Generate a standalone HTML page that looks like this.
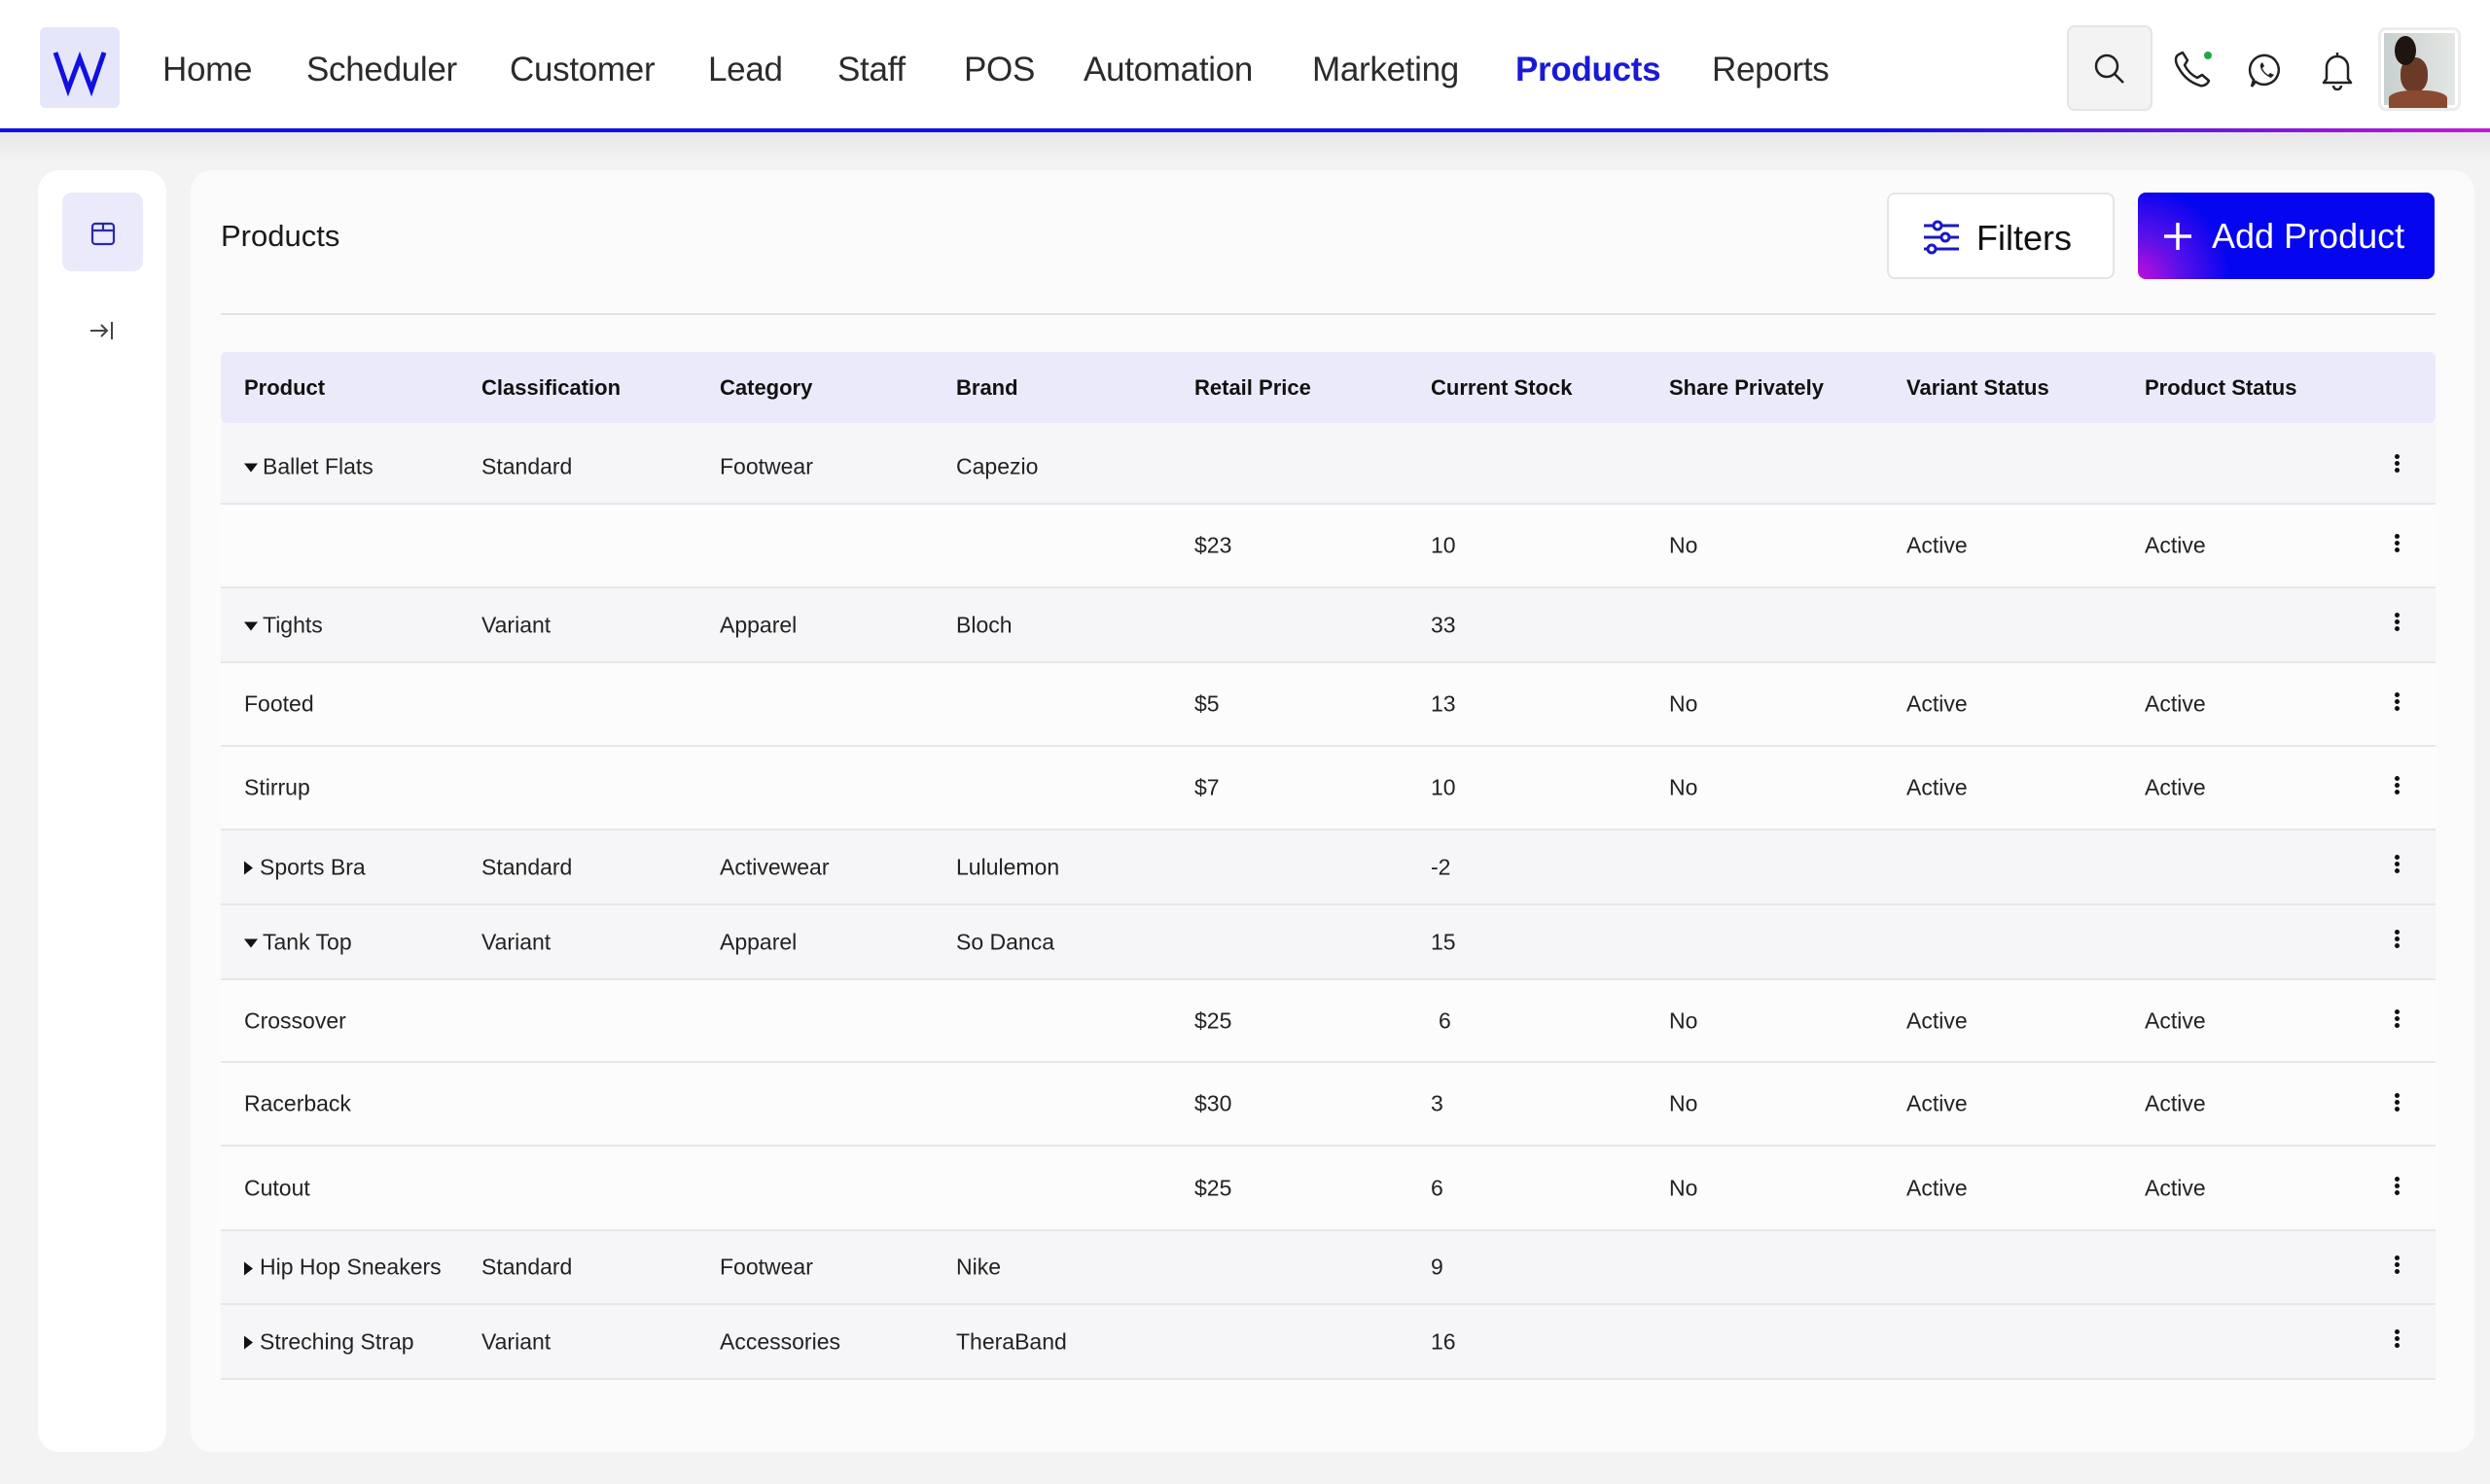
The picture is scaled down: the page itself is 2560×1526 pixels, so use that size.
<!DOCTYPE html>
<html><head><meta charset="utf-8"><style>
*{margin:0;padding:0;box-sizing:border-box}
body{width:2560px;height:1526px;background:#f3f3f3;font-family:"Liberation Sans",sans-serif;color:#1a1a1a;position:relative;overflow:hidden}
.nav{position:absolute;left:0;top:0;width:2560px;height:133px;background:#fff}
.bar{position:absolute;left:0;top:132px;width:2560px;height:4px;background:linear-gradient(90deg,#0a10e6 0%,#0a10e6 75%,#c418d8 100%)}
.shadow{position:absolute;left:0;top:136px;width:2560px;height:30px;background:linear-gradient(#e6e6e6,#f3f3f3)}
.logo{position:absolute;left:41px;top:28px;width:82px;height:83px;background:#e6e6fb;border-radius:6px}
.nl{position:absolute;top:52px;font-size:35px;color:#2b2b2b;letter-spacing:-0.3px}
.nl.act{color:#1a1ad6;font-weight:bold}
.sb{position:absolute;left:39px;top:175px;width:132px;height:1318px;background:#fff;border-radius:22px}
.panel{position:absolute;left:196px;top:175px;width:2348px;height:1318px;background:#fbfbfb;border-radius:22px}
.row{position:absolute;left:227px;width:2277px;border-bottom:2px solid #e7e7ea}
.row span{position:absolute;top:50%;transform:translateY(-50%);font-size:23px;color:#222;white-space:nowrap}
.p{background:#f6f6f8}.c{background:#fcfcfc}
.hd{position:absolute;left:227px;top:362px;width:2277px;height:73px;background:#ebeafb;border-radius:6px}
.hd span{position:absolute;top:50%;transform:translateY(-50%);font-size:22px;font-weight:bold;color:#111}
.k{position:absolute;width:5px}
.k i{display:block;width:5px;height:5px;border-radius:50%;background:#111;margin-bottom:2px}
.tri{display:inline-block;width:0;height:0;vertical-align:middle;margin-right:5px}
.dn{border-left:7px solid transparent;border-right:7px solid transparent;border-top:9px solid #111}
.rt{border-top:7px solid transparent;border-bottom:7px solid transparent;border-left:9px solid #111;margin-right:7px}
</style></head><body>
<div class="nav"></div>
<div class="bar"></div>
<div class="shadow"></div>
<div class="logo"><svg width="82" height="83" viewBox="0 0 82 83"><path d="M16 26 L29 64 L41 32 L53 64 L66 26" fill="none" stroke="#1010e0" stroke-width="5" stroke-linejoin="miter"/></svg></div>
<div class="nl" style="left:167px">Home</div>
<div class="nl" style="left:315px">Scheduler</div>
<div class="nl" style="left:524px">Customer</div>
<div class="nl" style="left:728px">Lead</div>
<div class="nl" style="left:861px">Staff</div>
<div class="nl" style="left:991px">POS</div>
<div class="nl" style="left:1114px">Automation</div>
<div class="nl" style="left:1349px">Marketing</div>
<div class="nl act" style="left:1558px">Products</div>
<div class="nl" style="left:1760px">Reports</div>
<div style="position:absolute;left:2125px;top:26px;width:88px;height:88px;background:#f3f3f3;border:2px solid #e4e4e4;border-radius:8px"></div>
<svg style="position:absolute;left:2150px;top:52px" width="40" height="40" viewBox="0 0 40 40"><circle cx="16" cy="16" r="11" fill="none" stroke="#222" stroke-width="2.5"/><path d="M24 24 L33 33" stroke="#222" stroke-width="2.5"/></svg>
<svg style="position:absolute;left:2232px;top:48px" width="46" height="46" viewBox="0 0 46 46"><path d="M8 8 C4 10 4 16 8 22 C13 31 20 37 30 40 C34 41 38 38 39 35 L32 29 L27 32 C21 29 17 25 14 19 L17 14 L12 6 Z" fill="none" stroke="#222" stroke-width="2.5" stroke-linejoin="round"/><circle cx="38" cy="9" r="4" fill="#1fa84a"/></svg>
<svg style="position:absolute;left:2310px;top:53px" width="40" height="40" viewBox="0 0 40 40"><path d="M20 4 A15 15 0 1 1 9 31 L5 36 L7 29 A15 15 0 0 1 20 4 Z" fill="none" stroke="#222" stroke-width="2.5"/><path d="M14 13 C13 17 17 24 25 27 L28 24 L24 22 L22 24 C19 22 17 20 16 17 L18 15 L16 11 Z" fill="#222"/></svg>
<svg style="position:absolute;left:2384px;top:51px" width="38" height="42" viewBox="0 0 38 42"><path d="M8 30 L8 18 A11 11 0 0 1 30 18 L30 30 L33 34 L5 34 Z M19 3 L19 7 M15 37 A4 4 0 0 0 23 37" fill="none" stroke="#222" stroke-width="2.5" stroke-linejoin="round"/></svg>
<div style="position:absolute;left:2445px;top:28px;width:85px;height:86px;border:3px solid #ececec;border-radius:8px;background:#fff;overflow:hidden">
<div style="position:absolute;left:3px;top:3px;width:73px;height:74px;background:linear-gradient(90deg,#c8d0cf,#e3e6e3)"></div>
<div style="position:absolute;left:20px;top:28px;width:28px;height:36px;border-radius:45%;background:#6b3a26"></div>
<div style="position:absolute;left:14px;top:6px;width:22px;height:30px;border-radius:50%;background:#1e1410"></div>
<div style="position:absolute;left:8px;top:62px;width:60px;height:20px;border-radius:40% 40% 0 0;background:#8a4a30"></div>
</div>

<div class="sb">
<div style="position:absolute;left:25px;top:23px;width:83px;height:81px;background:#ebeafb;border-radius:10px"></div>
<svg style="position:absolute;left:52px;top:50px" width="30" height="30" viewBox="0 0 30 30"><rect x="4" y="5" width="22" height="21" rx="3" fill="none" stroke="#2a2aa8" stroke-width="2.2"/><path d="M4 12 L26 12 M15 5 L15 12" stroke="#2a2aa8" stroke-width="2.2"/></svg>
<svg style="position:absolute;left:51px;top:150px" width="30" height="30" viewBox="0 0 30 30"><path d="M3 15 L20 15 M14 9 L20 15 L14 21 M25 6 L25 24" fill="none" stroke="#444" stroke-width="2"/></svg>
</div>

<div class="panel"></div>
<div style="position:absolute;left:227px;top:225px;font-size:31px;color:#1a1a1a">Products</div>
<div style="position:absolute;left:1940px;top:198px;width:234px;height:89px;background:#fff;border:2px solid #e4e4e4;border-radius:8px"></div>
<svg style="position:absolute;left:1976px;top:224px" width="40" height="40" viewBox="0 0 40 40"><g stroke="#1818c8" stroke-width="3" fill="none"><path d="M2 8 H38 M2 20 H38 M2 32 H38"/><circle cx="16" cy="8" r="4" fill="#fff"/><circle cx="24" cy="20" r="4" fill="#fff"/><circle cx="10" cy="32" r="4" fill="#fff"/></g></svg>
<div style="position:absolute;left:2032px;top:224px;font-size:36px;color:#111">Filters</div>
<div style="position:absolute;left:2198px;top:198px;width:305px;height:89px;border-radius:8px;background:radial-gradient(circle at 0% 100%,#c010d8 0%,#5a10ea 14%,#0505f0 30%,#0505f0 100%)"></div>
<svg style="position:absolute;left:2222px;top:226px" width="34" height="34" viewBox="0 0 34 34"><path d="M17 3 V31 M3 17 H31" stroke="#fff" stroke-width="3.5"/></svg>
<div style="position:absolute;left:2274px;top:222px;font-size:36px;color:#fff">Add Product</div>
<div style="position:absolute;left:227px;top:322px;width:2277px;height:2px;background:#e4e4e4"></div>

<div class="hd">
<span style="left:24px">Product</span><span style="left:268px">Classification</span><span style="left:513px">Category</span><span style="left:756px">Brand</span><span style="left:1001px">Retail Price</span><span style="left:1244px">Current Stock</span><span style="left:1489px">Share Privately</span><span style="left:1733px">Variant Status</span><span style="left:1978px">Product Status</span>
</div>

<div class="row p" style="top:435px;height:84px"><span style="left:24px;margin-top:4px"><i class="tri dn"></i>Ballet Flats</span><span style="left:268px;margin-top:4px">Standard</span><span style="left:513px;margin-top:4px">Footwear</span><span style="left:756px;margin-top:4px">Capezio</span></div>
<div class="row c" style="top:519px;height:86px"><span style="left:1001px">$23</span><span style="left:1244px">10</span><span style="left:1489px">No</span><span style="left:1733px">Active</span><span style="left:1978px">Active</span></div>
<div class="row p" style="top:605px;height:77px"><span style="left:24px"><i class="tri dn"></i>Tights</span><span style="left:268px">Variant</span><span style="left:513px">Apparel</span><span style="left:756px">Bloch</span><span style="left:1244px">33</span></div>
<div class="row c" style="top:682px;height:86px"><span style="left:24px">Footed</span><span style="left:1001px">$5</span><span style="left:1244px">13</span><span style="left:1489px">No</span><span style="left:1733px">Active</span><span style="left:1978px">Active</span></div>
<div class="row c" style="top:768px;height:86px"><span style="left:24px">Stirrup</span><span style="left:1001px">$7</span><span style="left:1244px">10</span><span style="left:1489px">No</span><span style="left:1733px">Active</span><span style="left:1978px">Active</span></div>
<div class="row p" style="top:854px;height:77px"><span style="left:24px"><i class="tri rt"></i>Sports Bra</span><span style="left:268px">Standard</span><span style="left:513px">Activewear</span><span style="left:756px">Lululemon</span><span style="left:1244px">-2</span></div>
<div class="row p" style="top:931px;height:77px"><span style="left:24px"><i class="tri dn"></i>Tank Top</span><span style="left:268px">Variant</span><span style="left:513px">Apparel</span><span style="left:756px">So Danca</span><span style="left:1244px">15</span></div>
<div class="row c" style="top:1008px;height:85px"><span style="left:24px">Crossover</span><span style="left:1001px">$25</span><span style="left:1252px">6</span><span style="left:1489px">No</span><span style="left:1733px">Active</span><span style="left:1978px">Active</span></div>
<div class="row c" style="top:1093px;height:86px"><span style="left:24px">Racerback</span><span style="left:1001px">$30</span><span style="left:1244px">3</span><span style="left:1489px">No</span><span style="left:1733px">Active</span><span style="left:1978px">Active</span></div>
<div class="row c" style="top:1179px;height:87px"><span style="left:24px">Cutout</span><span style="left:1001px">$25</span><span style="left:1244px">6</span><span style="left:1489px">No</span><span style="left:1733px">Active</span><span style="left:1978px">Active</span></div>
<div class="row p" style="top:1266px;height:76px"><span style="left:24px"><i class="tri rt"></i>Hip Hop Sneakers</span><span style="left:268px">Standard</span><span style="left:513px">Footwear</span><span style="left:756px">Nike</span><span style="left:1244px">9</span></div>
<div class="row p" style="top:1342px;height:77px"><span style="left:24px"><i class="tri rt"></i>Streching Strap</span><span style="left:268px">Variant</span><span style="left:513px">Accessories</span><span style="left:756px">TheraBand</span><span style="left:1244px">16</span></div>

<div class="k" style="left:2462px;top:467px"><i></i><i></i><i></i></div>
<div class="k" style="left:2462px;top:549px"><i></i><i></i><i></i></div>
<div class="k" style="left:2462px;top:630px"><i></i><i></i><i></i></div>
<div class="k" style="left:2462px;top:712px"><i></i><i></i><i></i></div>
<div class="k" style="left:2462px;top:798px"><i></i><i></i><i></i></div>
<div class="k" style="left:2462px;top:879px"><i></i><i></i><i></i></div>
<div class="k" style="left:2462px;top:956px"><i></i><i></i><i></i></div>
<div class="k" style="left:2462px;top:1038px"><i></i><i></i><i></i></div>
<div class="k" style="left:2462px;top:1124px"><i></i><i></i><i></i></div>
<div class="k" style="left:2462px;top:1210px"><i></i><i></i><i></i></div>
<div class="k" style="left:2462px;top:1291px"><i></i><i></i><i></i></div>
<div class="k" style="left:2462px;top:1367px"><i></i><i></i><i></i></div>
</body></html>
